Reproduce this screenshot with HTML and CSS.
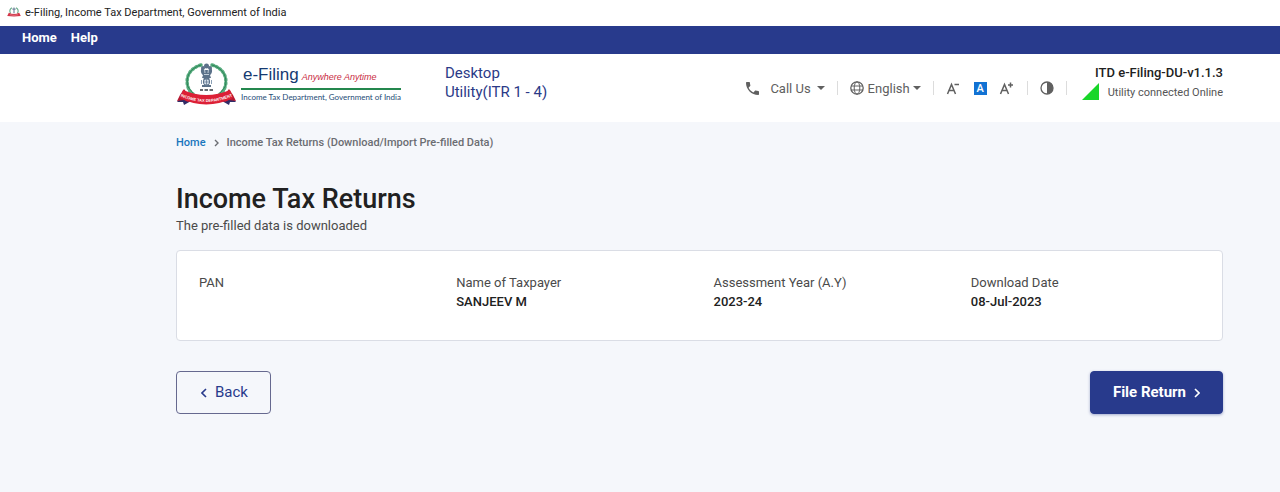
FILE: index.html
```html
<!DOCTYPE html>
<html lang="en">
<head>
<meta charset="utf-8">
<meta name="viewport" content="width=device-width, initial-scale=1">
<title>e-Filing, Income Tax Department, Government of India</title>
<link rel="stylesheet" href="styles.css">
</head>
<body>
<div class="titlebar">
  <svg class="titlebar-icon" viewBox="0 0 62 44" aria-hidden="true">
    <path d="M22 3C12 9 11 20 16 29M40 3C50 9 51 20 46 29" fill="none" stroke="#6cae8d" stroke-width="5"/>
    <path d="M31 2V28M24 9H38" stroke="#71869c" stroke-width="5"/>
    <path d="M8 25Q31 36 54 25L61 40Q31 44 1 40Z" fill="#d33548"/>
    <path d="M13 34Q31 40 49 34" fill="none" stroke="#efb7be" stroke-width="2"/>
  </svg>
  <span>e-Filing, Income Tax Department, Government of India</span>
</div>

<nav class="menubar" aria-label="Application menu">
  <a href="#">Home</a>
  <a href="#">Help</a>
</nav>

<header class="header">
  <a class="brand" href="#">
    <svg class="brand-emblem" viewBox="0 0 62 44" aria-hidden="true">
      <g fill="none" stroke-linecap="round">
        <path d="M25 3C14 6 9 15 12 25C13 28 14 30 17 32" stroke="#5aae80" stroke-width="3.500" stroke-dasharray="1.500 2.600"/>
        <path d="M36 3C47 6 52 15 49 25C48 28 47 30 44 32" stroke="#5aae80" stroke-width="3.500" stroke-dasharray="1.500 2.600"/>
        <path d="M25 3C14 6 9 15 12 25L17 31M36 3C47 6 52 15 49 25L44 31" stroke="#2c8458" stroke-width="1"/>
      </g>
      <g fill="#5b7189">
        <circle cx="30.500" cy="4" r="2.500"/>
        <path d="M26 6C24 8 25 12 27 13L26 16H35L34 13C36 12 37 8 35 6L33 8H28Z"/>
        <path d="M28 15H33L34 19H27Z"/>
        <circle cx="27" cy="6" r="2"/><circle cx="34" cy="6" r="2"/>
        <path d="M26 23H35V25H26Z"/>
      </g>
      <path d="M28.500 7L29 11M32.500 7L32 11M28 12.500H33" stroke="#dbe4ec" stroke-width=".8"/>
      <circle cx="30.500" cy="20" r="3.200" fill="#d7e2ed" stroke="#5b7189"/>
      <path d="M25.500 18V22M35.500 18V22" stroke="#8ba0b6"/>
      <path d="M30.500 17V23M27.500 20H33.500" stroke="#5b7189" stroke-width=".7"/>
      <path d="M24 28H27M28.500 28H32M33.500 28H37" stroke="#353b42" stroke-width="1.600"/>
      <path d="M7 33L1 40L7 40L8 43L15 39ZM54 33L60 40L54 40L53 43L46 39Z" fill="#302c67"/>
      <path d="M8 27L4 33L1 39L8 38L12 40L14 35ZM53 27L57 33L60 39L53 38L49 40L47 35Z" fill="#b71832"/>
      <path d="M7 28Q30 38 54 28L57 36Q30 49 4 36Z" fill="#dc2036"/>
      <path id="ribbon-line" d="M4 34Q30.500 46 57 34" fill="none"/>
      <text class="ribbon-text"><textPath href="#ribbon-line" startOffset="50%" text-anchor="middle">INCOME TAX DEPARTMENT</textPath></text>
    </svg>
    <span class="brand-text">
      <span class="brand-top"><span class="brand-name">e-Filing</span><span class="brand-tag">Anywhere Anytime</span></span>
      <span class="brand-sub">Income Tax Department, Government of India</span>
    </span>
  </a>
  <div class="product">Desktop<br>Utility(ITR 1 - 4)</div>

  <div class="tools">
    <button class="tool call" type="button">
      <svg class="phone" viewBox="3 3 18 18" aria-hidden="true"><path fill="currentColor" d="M20 15.500c-1.300 0-2.500-.2-3.600-.6-.3-.1-.7 0-1 .3l-2.200 2.200c-2.800-1.500-5.200-3.800-6.600-6.600l2.200-2.200c.3-.3.400-.7.200-1C8.700 6.500 8.500 5.300 8.500 4c0-.6-.5-1-1-1H4c-.6 0-1 .5-1 1 0 9.400 7.600 17 17 17 .6 0 1-.5 1-1v-3.500c0-.6-.5-1-1-1z"/></svg>
      <span>Call Us</span><span class="caret"></span>
    </button>
    <span class="divider"></span>
    <button class="tool language" type="button">
      <svg class="globe" viewBox="0 0 14 14" fill="none" stroke="currentColor" aria-hidden="true"><circle cx="7" cy="7" r="6.200" stroke-width="1.300"/><ellipse cx="7" cy="7" rx="2.800" ry="6.200"/><path d="M1 5H13M1 9H13"/></svg>
      <span>English</span><span class="caret"></span>
    </button>
    <span class="divider"></span>
    <div class="sizes">
      <button class="size" type="button" aria-label="Decrease text size">
        <svg viewBox="0 0 16 14" fill="none" stroke="currentColor" stroke-width="1.500" aria-hidden="true"><path d="M1.500 13L5.500 3.500L9.500 13M3 9.500H8M8.500 3.500H13"/></svg>
      </button>
      <button class="size-current" type="button" aria-label="Default text size">A</button>
      <button class="size" type="button" aria-label="Increase text size">
        <svg viewBox="0 0 16 14" fill="none" stroke="currentColor" stroke-width="1.500" aria-hidden="true"><path d="M1.500 13L5.500 3.500L9.500 13M3 9.500H8M9 4H14M11.500 1.500V6.500"/></svg>
      </button>
    </div>
    <span class="divider"></span>
    <button class="contrast" type="button" aria-label="Toggle contrast">
      <svg viewBox="0 0 14 14" aria-hidden="true"><circle cx="7" cy="7" r="6" fill="none" stroke="currentColor" stroke-width="1.300"/><path d="M7 1A6 6 0 0 1 7 13Z" fill="currentColor"/></svg>
    </button>
    <span class="divider"></span>
  </div>

  <div class="status">
    <strong>ITD e-Filing-DU-v1.1.3</strong>
    <div class="connection">
      <svg class="signal" viewBox="0 0 17 17" aria-hidden="true"><path d="M17 0V17H0Z" fill="#18d629"/></svg>
      <span>Utility connected Online</span>
    </div>
  </div>
</header>

<main class="content">
  <nav class="breadcrumb" aria-label="Breadcrumb">
    <a href="#">Home</a>
    <svg viewBox="0 0 5 8" aria-hidden="true"><path d="M1 1L4 4L1 7"/></svg>
    <span>Income Tax Returns (Download/Import Pre-filled Data)</span>
  </nav>
  <h1>Income Tax Returns</h1>
  <p class="subtitle">The pre-filled data is downloaded</p>

  <dl class="card">
    <div><dt>PAN</dt><dd></dd></div>
    <div><dt>Name of Taxpayer</dt><dd>SANJEEV M</dd></div>
    <div><dt>Assessment Year (A.Y)</dt><dd>2023-24</dd></div>
    <div><dt>Download Date</dt><dd>08-Jul-2023</dd></div>
  </dl>

  <div class="actions">
    <button class="button back" type="button"><svg viewBox="0 0 6 10" aria-hidden="true"><path d="M5 1L1 5L5 9"/></svg>Back</button>
    <button class="button primary" type="button">File Return<svg viewBox="0 0 6 10" aria-hidden="true"><path d="M1 1L5 5L1 9"/></svg></button>
  </div>
</main>
</body>
</html>
```
FILE: styles.css
```css
* { box-sizing: border-box; }

body {
  margin: 0;
  min-height: 100vh;
  background: #f5f7fb;
  color: #212121;
  font-family: Roboto, "Liberation Sans", sans-serif;
  font-size: 13px;
  line-height: 19px;
}

button {
  padding: 0;
  border: 0;
  background: none;
  color: inherit;
  font: inherit;
  cursor: pointer;
}

a { text-decoration: none; }
svg { display: block; flex: none; }

.titlebar {
  display: flex;
  align-items: center;
  gap: 4px;
  height: 26px;
  padding: 0 7px 2px;
  background: #fff;
  color: #222;
  font-size: 11px;
}
.titlebar-icon { width: 14px; height: 10px; }

.menubar {
  display: flex;
  gap: 14px;
  padding: 2px 22px 7px;
  background: #283a8c;
}
.menubar a { color: #fff; font-weight: 700; }

.header {
  display: flex;
  align-items: center;
  height: 68px;
  padding: 0 57px 0 176px;
  background: #fff;
}

.brand { display: flex; align-items: center; }
.brand-emblem { width: 62px; height: 44px; margin-top: -8px; }
.ribbon-text { fill: #fff; font: 700 4px "Liberation Sans", sans-serif; }
.brand-text {
  display: flex;
  flex-direction: column;
  margin-top: -8px;
  margin-left: 3px;
}
.brand-top {
  display: flex;
  align-items: baseline;
  gap: 3px;
  padding-left: 2px;
  border-bottom: 2px solid #24874e;
  font-family: "Liberation Sans", sans-serif;
  line-height: 22px;
  white-space: nowrap;
}
.brand-name { color: #153a71; font-size: 17px; }
.brand-tag { color: #c92a42; font-size: 9px; font-style: italic; }
.brand-sub {
  color: #1e4c76;
  font-family: Lato, "Liberation Sans", sans-serif;
  font-size: 8px;
  line-height: 14px;
  white-space: nowrap;
}

.product {
  margin-left: 44px;
  margin-top: -10px;
  color: #2b3a87;
  font-size: 15px;
  white-space: nowrap;
}

.tools {
  display: flex;
  align-items: center;
  margin-left: auto;
  color: #606060;
}
.tool { display: flex; align-items: center; white-space: nowrap; }
.phone { width: 13px; height: 13px; margin-right: 11px; }
.globe { width: 14px; height: 14px; margin-right: 4px; }
.caret {
  border: 4px solid transparent;
  border-top-color: currentColor;
  border-bottom-width: 0;
}
.call .caret { margin-left: 6px; }
.language .caret { margin-left: 3px; }
.divider { width: 1px; height: 14px; margin: 0 12px; background: #dcdcdc; }
.sizes { display: flex; align-items: center; gap: 12px; }
.size svg { width: 16px; height: 14px; }
.size-current {
  width: 13px;
  height: 13px;
  background: #1272d3;
  color: #fff;
  font-size: 11px;
  font-weight: 500;
  line-height: 13px;
}
.contrast svg { width: 14px; height: 14px; }

.status { margin-top: -11px; margin-left: 3px; text-align: right; white-space: nowrap; }
.status strong { display: block; margin-bottom: 1px; font-weight: 500; }
.connection {
  display: flex;
  align-items: flex-start;
  justify-content: flex-end;
  gap: 9px;
  color: #555;
  font-size: 11px;
}
.signal { width: 17px; height: 17px; }

.content { padding: 11px 57px 32px 176px; }

.breadcrumb {
  display: flex;
  align-items: center;
  gap: 8px;
  color: #6b6d72;
  font-size: 11px;
  font-weight: 500;
}
.breadcrumb a { color: #1976bd; }
.breadcrumb svg { width: 5px; height: 8px; }
.breadcrumb path, .button path {
  fill: none;
  stroke: currentColor;
  stroke-width: 1.4;
}

h1 {
  margin: 30px 0 0;
  font-size: 27px;
  font-weight: 500;
  line-height: 34px;
}
.subtitle { margin: 0; color: #4a4a4a; }

.card {
  display: grid;
  grid-template-columns: repeat(4, 1fr);
  column-gap: 6px;
  min-height: 91px;
  margin: 15px 0 0;
  padding: 22px 0 22px 22px;
  border: 1px solid #dadde5;
  border-radius: 4px;
  background: #fff;
}
.card dt { color: #4a4a4a; }
.card dd { margin: 0; font-weight: 500; }

.actions {
  display: flex;
  justify-content: space-between;
  margin-top: 30px;
}
.button {
  display: flex;
  align-items: center;
  gap: 8px;
  padding: 11px 22px;
  border: 1px solid #283a8c;
  border-radius: 4px;
  font-size: 15px;
}
.button svg { width: 6px; height: 10px; }
.button path { stroke-width: 1.6; }
.back { padding-left: 24px; border-color: #66698f; color: #283a8c; }
.primary {
  background: #283a8c;
  color: #fff;
  font-weight: 700;
  box-shadow: 0 1px 3px #283a8c66;
}
```
